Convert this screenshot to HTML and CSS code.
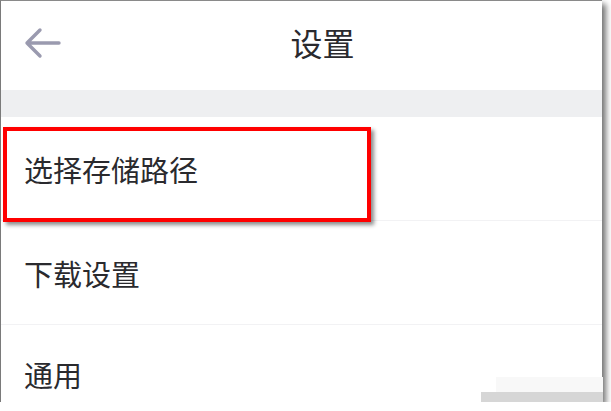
FILE: index.html
```html
<!DOCTYPE html>
<html lang="zh-CN">
<head>
    <meta charset="UTF-8">
    <title>设置</title>

    <link rel="stylesheet" href="styles.css">

</head>
<body>

<div class="screen">
    <div class="title-bar">
        <div class="back-btn">
            <svg width="38" height="32" viewBox="0 0 38 32">
                <path d="M3 16 H35 M16 3 L3 16 L16 29" fill="none" stroke="#9a9aaf" stroke-width="3.4" stroke-linecap="round" stroke-linejoin="round"/>
            </svg>
        </div>
        <div class="title-text">设置</div>
    </div>

    <div class="group-gap"></div>

    <div class="setting-list">
        <div class="setting-item marked">
            <span>选择存储路径</span>
            <div class="red-mark"></div>
        </div>
        <div class="setting-item">
            <span>下载设置</span>
        </div>
        <div class="setting-item last">
            <span>通用</span>
        </div>
    </div>
</div>

<!-- 打码的水印 -->
<div class="mosaic">
    <div class="mosaic-top"></div>
    <div class="mosaic-bottom"></div>
</div>

</body>
</html>
```

FILE: styles.css
```css
html, body {
    margin: 0;
    padding: 0;
    background: #ffffff;
}

body {
    position: relative;
}

.screen {
    width: 601px;
    height: 401px;
    border-left: 1px solid #7a7a7a;
    border-top: 1px solid #8a8a8a;
    background: #ffffff;
    box-shadow: 4px 4px 6px rgba(0, 0, 0, 0.55);
    overflow: hidden;
    font-family: "Noto Sans CJK SC", "Noto Sans", sans-serif;
    color: #2a2a2e;
}

.title-bar {
    height: 89px;
    display: flex;
    align-items: center;
}

.back-btn {
    width: 38px;
    height: 32px;
    margin-left: 23px;
    margin-top: -6px;
}

.back-btn svg {
    display: block;
}

.title-text {
    flex: 1;
    text-align: center;
    font-size: 32px;
    padding-left: 42px;
    padding-right: 61px;
    margin-top: -8px;
    line-height: 1;
}

.group-gap {
    height: 27px;
    background: #eeeff1;
}

.setting-item {
    position: relative;
    height: 103px;
    border-bottom: 1px solid #f2f2f4;
    display: flex;
    align-items: center;
    padding-left: 23px;
    font-size: 29px;
}

.setting-item.last {
    border-bottom: none;
    height: 98px;
}

.red-mark {
    position: absolute;
    left: 2px;
    top: 10px;
    width: 360px;
    height: 87px;
    border: 4px solid #ff0000;
    box-shadow: 3px 3px 4px rgba(0, 0, 0, 0.45);
}

.mosaic {
    position: absolute;
    left: 481px;
    top: 377px;
    width: 122px;
    height: 32px;
}

.mosaic-top {
    height: 15px;
    margin-left: 15px;
    background: #f8f8f8;
}

.mosaic-bottom {
    height: 17px;
    background: #d6d6d6;
}
```
